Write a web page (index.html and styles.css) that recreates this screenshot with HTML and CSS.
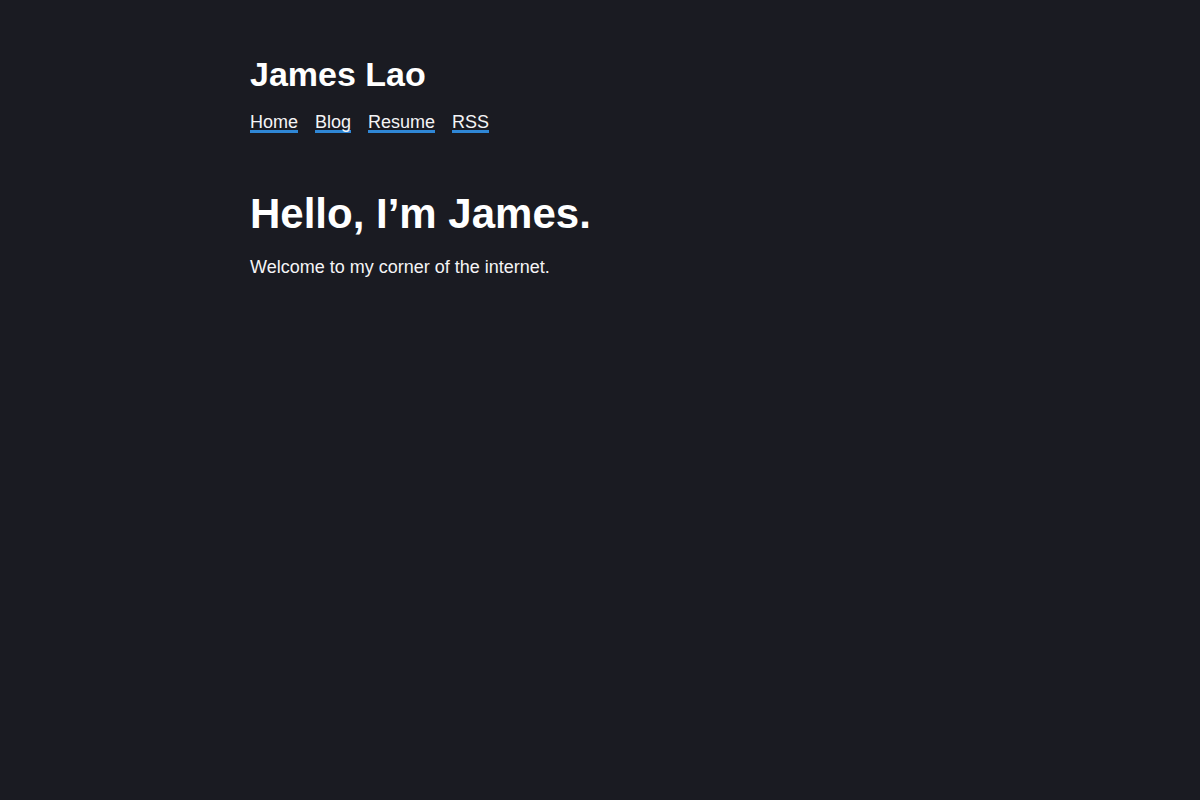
FILE: index.html
```html
<!DOCTYPE html>
<html lang="en">
<head>
<meta charset="utf-8">
<title>James Lao</title>
<link rel="stylesheet" href="styles.css">
</head>
<body>
<div class="container">
  <header class="site-header">
    <h1 class="site-title">James Lao</h1>
    <nav class="nav">
      <a href="#">Home</a>
      <a href="#">Blog</a>
      <a href="#">Resume</a>
      <a href="#">RSS</a>
    </nav>
  </header>
  <main class="content">
    <h2 class="hello">Hello, I’m James.</h2>
    <p class="intro">Welcome to my corner of the internet.</p>
  </main>
</div>
</body>
</html>
```

FILE: styles.css
```css
html, body {
  margin: 0;
  padding: 0;
  background: #1a1b22;
}
body {
  color: #f4f4f6;
  font-family: "Liberation Sans", Arial, sans-serif;
  font-size: 18px;
}
.container {
  max-width: 700px;
  margin: 0 auto;
  padding-top: 54px;
}
.site-title {
  margin: 0;
  font-size: 34px;
  font-weight: 700;
  line-height: 40px;
  color: #ffffff;
}
.nav {
  display: flex;
  gap: 17px;
  margin-top: 20px;
}
.nav a {
  color: #f4f4f6;
  text-decoration: none;
  font-size: 18px;
  line-height: 16px;
  border-bottom: 3px solid #2f87d6;
}
.content {
  margin-top: 56px;
}
.hello {
  margin: 0;
  font-size: 42px;
  line-height: 50px;
  font-weight: 700;
  color: #ffffff;
}
.intro {
  margin: 16px 0 0;
  font-size: 18px;
  line-height: 24px;
}
```
